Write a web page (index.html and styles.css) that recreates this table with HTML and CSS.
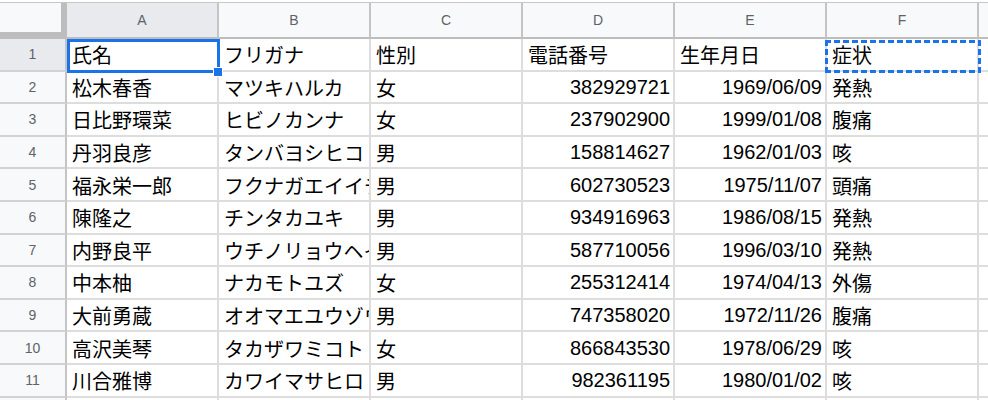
FILE: index.html
```html
<!DOCTYPE html>
<html lang="ja">
<head>
<meta charset="utf-8">
<link rel="stylesheet" href="styles.css">
</head>
<body>
<div class="sheet">
  <div class="corner"><div class="corner-box"></div></div>
  <div class="ch sel">A</div><div class="ch">B</div><div class="ch">C</div><div class="ch">D</div><div class="ch">E</div><div class="ch">F</div><div class="ch last"></div>

  <div class="rh sel">1</div>
  <div class="c active">氏名<span class="sel-box"></span><span class="handle"></span></div><div class="c">フリガナ</div><div class="c">性別</div><div class="c">電話番号</div><div class="c">生年月日</div><div class="c copy">症状<span class="dash-box"></span></div><div class="c last"></div>

  <div class="rh">2</div>
  <div class="c">松木春香</div><div class="c">マツキハルカ</div><div class="c">女</div><div class="c num">382929721</div><div class="c num">1969/06/09</div><div class="c">発熱</div><div class="c last"></div>

  <div class="rh">3</div>
  <div class="c">日比野環菜</div><div class="c">ヒビノカンナ</div><div class="c">女</div><div class="c num">237902900</div><div class="c num">1999/01/08</div><div class="c">腹痛</div><div class="c last"></div>

  <div class="rh">4</div>
  <div class="c">丹羽良彦</div><div class="c">タンバヨシヒコ</div><div class="c">男</div><div class="c num">158814627</div><div class="c num">1962/01/03</div><div class="c">咳</div><div class="c last"></div>

  <div class="rh">5</div>
  <div class="c">福永栄一郎</div><div class="c">フクナガエイイチロウ</div><div class="c">男</div><div class="c num">602730523</div><div class="c num">1975/11/07</div><div class="c">頭痛</div><div class="c last"></div>

  <div class="rh">6</div>
  <div class="c">陳隆之</div><div class="c">チンタカユキ</div><div class="c">男</div><div class="c num">934916963</div><div class="c num">1986/08/15</div><div class="c">発熱</div><div class="c last"></div>

  <div class="rh">7</div>
  <div class="c">内野良平</div><div class="c">ウチノリョウヘイ</div><div class="c">男</div><div class="c num">587710056</div><div class="c num">1996/03/10</div><div class="c">発熱</div><div class="c last"></div>

  <div class="rh">8</div>
  <div class="c">中本柚</div><div class="c">ナカモトユズ</div><div class="c">女</div><div class="c num">255312414</div><div class="c num">1974/04/13</div><div class="c">外傷</div><div class="c last"></div>

  <div class="rh">9</div>
  <div class="c">大前勇蔵</div><div class="c">オオマエユウゾウ</div><div class="c">男</div><div class="c num">747358020</div><div class="c num">1972/11/26</div><div class="c">腹痛</div><div class="c last"></div>

  <div class="rh">10</div>
  <div class="c">高沢美琴</div><div class="c">タカザワミコト</div><div class="c">女</div><div class="c num">866843530</div><div class="c num">1978/06/29</div><div class="c">咳</div><div class="c last"></div>

  <div class="rh">11</div>
  <div class="c">川合雅博</div><div class="c">カワイマサヒロ</div><div class="c">男</div><div class="c num">982361195</div><div class="c num">1980/01/02</div><div class="c">咳</div><div class="c last"></div>

  <div class="rh">12</div>
  <div class="c"></div><div class="c"></div><div class="c"></div><div class="c"></div><div class="c"></div><div class="c"></div><div class="c last"></div>
</div>
</body>
</html>
```

FILE: styles.css
```css
html, body {
  margin: 0;
  padding: 0;
  background: #ffffff;
  overflow: hidden;
}

body {
  padding-top: 2px;
  font-family: "Liberation Sans", "Noto Sans CJK JP", sans-serif;
}

.sheet {
  display: grid;
  grid-template-columns: 67px repeat(6, 152px) 1fr;
  grid-template-rows: 36px repeat(12, 32.6px);
  border-top: 1px solid #c7c7c7;
  width: 988px;
}

.corner {
  background: #bdbdbd;
  box-sizing: border-box;
}

.corner-box {
  width: 61px;
  height: 29px;
  background: #f8f9fa;
}

.ch {
  box-sizing: border-box;
  background: #f8f9fa;
  border-right: 2px solid #c4c4c4;
  border-bottom: 2px solid #bdbdbd;
  display: flex;
  align-items: center;
  justify-content: center;
  font-size: 14px;
  color: #5f6368;
}

.ch.sel {
  background: #e8eaed;
}

.ch.last {
  border-right: none;
}

.rh {
  box-sizing: border-box;
  background: #f8f9fa;
  border-right: 2px solid #c4c4c4;
  border-bottom: 2px solid #d2d2d2;
  display: flex;
  align-items: center;
  justify-content: center;
  font-size: 14px;
  color: #5f6368;
}

.rh.sel {
  background: #e8eaed;
}

.c {
  position: relative;
  box-sizing: border-box;
  border-right: 2px solid #dddddd;
  border-bottom: 2px solid #dddddd;
  padding: 1px 3px 0 5px;
  font-size: 20px;
  color: #000000;
  white-space: nowrap;
  display: flex;
  align-items: center;
  overflow: hidden;
}

.c.active, .c.copy {
  overflow: visible;
  z-index: 2;
}

.c.num {
  justify-content: flex-end;
}

.c.last {
  border-right: none;
}

.sel-box {
  position: absolute;
  left: 0;
  top: 0;
  right: -3px;
  bottom: -3px;
  border: 3px solid #1a73e8;
  box-sizing: border-box;
}

.handle {
  position: absolute;
  right: -6px;
  bottom: -7px;
  width: 8px;
  height: 8px;
  background: #1a73e8;
  border: 1px solid #ffffff;
}

.dash-box {
  position: absolute;
  left: -2px;
  top: 1px;
  right: -4px;
  bottom: -3px;
  background:
    repeating-linear-gradient(to right, #1a73e8 0 6px, transparent 6px 9px) top / 100% 3px no-repeat,
    repeating-linear-gradient(to right, #1a73e8 0 6px, transparent 6px 9px) bottom / 100% 3px no-repeat,
    repeating-linear-gradient(to bottom, #1a73e8 0 6px, transparent 6px 9px) left / 3px 100% no-repeat,
    repeating-linear-gradient(to bottom, #1a73e8 0 6px, transparent 6px 9px) right / 3px 100% no-repeat;
}
```
